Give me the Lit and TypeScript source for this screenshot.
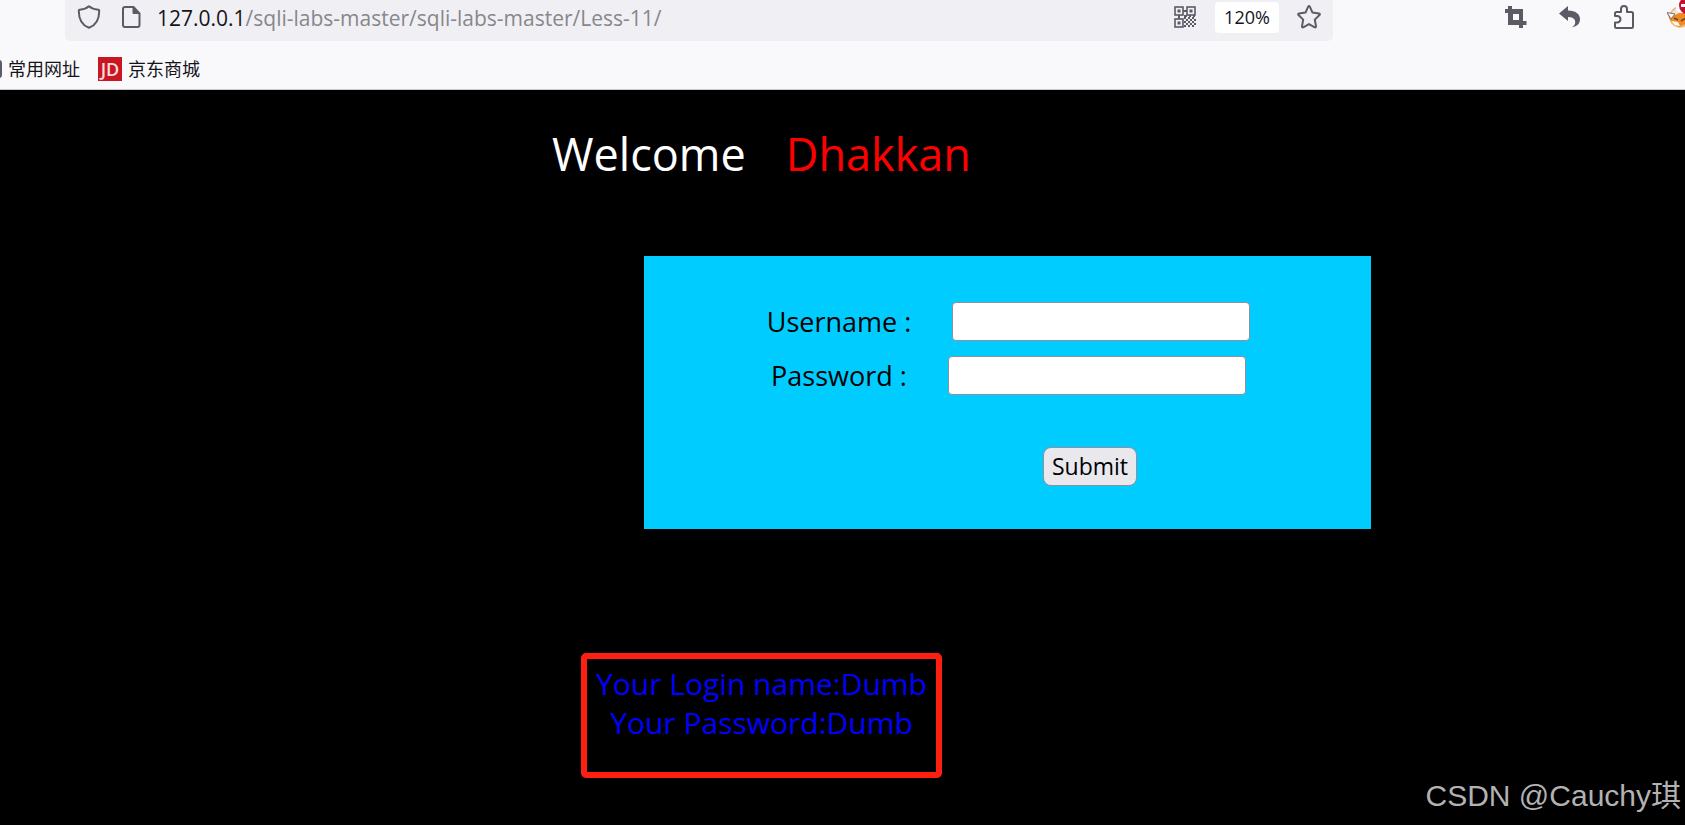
import { LitElement, html, css, svg } from "lit";
import { customElement } from "lit/decorators.js";

const QR_DOTS = [
  [14, 12], [18, 12],
  [12, 14], [16, 14], [20, 14],
  [14, 16], [18, 16],
  [12, 18], [16, 18], [20, 18],
  [14, 20], [18, 20],
];

@customElement("browser-chrome")
export class BrowserChrome extends LitElement {
  static styles = css`
    :host {
      display: block;
      background: #f9f9fb;
      border-bottom: 1px solid #c3cbc8;
      color: #15141a;
      font-family: "Open Sans", "Noto Sans CJK SC", sans-serif;
    }
    svg {
      display: block;
      flex: none;
    }
    a {
      color: inherit;
      text-decoration: none;
    }
    button {
      border: 0;
      padding: 0;
      background: none;
      color: #5b5b66;
      font: inherit;
      flex: none;
    }
    .toolbar {
      display: flex;
      height: 41px;
      padding-left: 65px;
      overflow: hidden;
    }
    .address {
      flex: 1;
      display: flex;
      align-items: center;
      box-sizing: border-box;
      padding: 0 12px 7px;
      background: #f0f0f4;
      border-radius: 0 0 5px 5px;
    }
    .page-icon {
      margin-left: 20px;
    }
    .url {
      flex: 1;
      margin-left: 16px;
      padding-top: 2px;
      font-size: 21px;
      line-height: 30px;
      color: #87878c;
      white-space: nowrap;
    }
    .host {
      color: #15141a;
    }
    .zoom {
      width: 64px;
      height: 31px;
      margin: 0 18px 0 19px;
      border-radius: 4px;
      background: #fff;
      color: #15141a;
      font-size: 18px;
      line-height: 31px;
    }
    .tools {
      display: flex;
      align-items: center;
      gap: 32px;
      width: 180px;
      padding: 0 0 7px 172px;
    }
    .bookmarks {
      display: flex;
      align-items: center;
      height: 48px;
      font-size: 18px;
      line-height: 26px;
      overflow: hidden;
    }
    .bookmark {
      display: flex;
      align-items: center;
      gap: 6px;
      margin-right: 18px;
      padding-top: 7px;
    }
    .folder {
      width: 2px;
    }
    .jd {
      width: 24px;
      height: 24px;
      background: #c81623;
      color: #fbdcde;
      font-family: "Open Sans", sans-serif;
      font-size: 18px;
      font-weight: 600;
      line-height: 25px;
      text-align: center;
    }
  `;

  render() {
    return html`
      <nav class="toolbar" aria-label="Navigation">
        <div class="address">
          <button aria-label="Tracking protection">
            <svg width="24" height="24" viewBox="0 0 24 24" fill="none" stroke="#5b5b66" stroke-width="2" stroke-linejoin="round">
              <path d="M12 1.2C9 3.8 5.500 4.500 2.600 4.800Q1.800 4.900 1.800 5.800C1.700 14 4.500 20 12 22.800C19.500 20 22.300 14 22.200 5.800Q22.200 4.900 21.400 4.800C18.500 4.500 15 3.800 12 1.200Z" />
            </svg>
          </button>
          <button class="page-icon" aria-label="Site information">
            <svg width="20" height="22" viewBox="0 0 20 22">
              <path d="M12.500 1H4Q2 1 2 3V19Q2 21 4 21H16.500Q18.500 21 18.500 19V7.500Z" fill="none" stroke="#5b5b66" stroke-width="2" stroke-linejoin="round" />
              <path d="M12 1V7.500H18.500Z" fill="#5b5b66" stroke="#5b5b66" stroke-linejoin="round" />
            </svg>
          </button>
          <a class="url" href="#"><span class="host">127.0.0.1</span>/sqli-labs-master/sqli-labs-master/Less-11/</a>
          <button aria-label="QR code">
            <svg width="22" height="22" viewBox="0 0 22 22">
              <g fill="none" stroke="#5b5b66" stroke-width="1.600">
                <rect x="1" y="1" width="8" height="8" />
                <rect x="13" y="1" width="8" height="8" />
                <rect x="1" y="13" width="8" height="8" />
              </g>
              <g fill="#5b5b66">
                <rect x="3.500" y="3.500" width="3" height="3" />
                <rect x="15.500" y="3.500" width="3" height="3" />
                <rect x="3.500" y="15.500" width="3" height="3" />
                <rect x="9" y="4" width="4" height="2" />
                <rect x="4" y="9" width="2" height="4" />
                <rect x="10" y="9" width="3" height="2" />
                <rect x="15" y="9" width="2" height="2" />
                <rect x="19" y="9" width="2" height="2" />
                ${QR_DOTS.map(([x, y]) => svg`<rect x=${x} y=${y - 1} width="2" height="2" />`)}
                <rect x="10" y="11" width="2" height="2" />
                <rect x="10" y="15" width="2" height="2" />
                <rect x="10" y="19" width="2" height="2" />
              </g>
            </svg>
          </button>
          <button class="zoom">120%</button>
          <button aria-label="Bookmark this page">
            <svg width="24" height="24" viewBox="0 0 24 24" fill="none" stroke="#5b5b66" stroke-width="2" stroke-linejoin="round">
              <path d="M11.200 1.700Q12 .5 12.800 1.700L15.500 7.600L22 8.500Q23.400 9 22.500 10L17.800 14.600L19 21.300Q19 22.700 17.800 22.300L12 19.100L6.200 22.300Q5 22.700 5 21.300L6.200 14.600L1.500 10Q.6 9 2 8.500L8.500 7.600Z" />
            </svg>
          </button>
        </div>
        <div class="tools">
          <button aria-label="Screenshot">
            <svg width="22" height="22" viewBox="0 0 22 22" fill="#5b5b66">
              <path d="M3 0H7V3H18V15H21.500V19H18V22H14V19H3V7H0V3H3ZM8 8V14H14V8Z" fill-rule="evenodd" />
            </svg>
          </button>
          <button aria-label="Undo">
            <svg width="22" height="22" viewBox="0 0 22 22" fill="#5b5b66">
              <path d="M0 7.500L9 0V4.500C17 4.500 21.500 8.500 21 14Q20.500 19.500 13 21.500Q17.500 18 15.800 14Q14.300 11 9 11V15Z" />
            </svg>
          </button>
          <button aria-label="Extensions">
            <svg width="22" height="24" viewBox="0 0 22 24" fill="none" stroke="#5b5b66" stroke-width="2" stroke-linejoin="round">
              <path d="M2 11V8.500Q2 7 3.500 7H8V4Q8 1 11 1T14 4V7H18.500Q20 7 20 8.500V21.500Q20 23 18.500 23H3.500Q2 23 2 21.500V17.500H4.500Q7.500 17 7.500 14.250T4.500 11Z" />
            </svg>
          </button>
          <button aria-label="Proxy extension">
            <svg width="28" height="34" viewBox="0 0 28 34">
              <circle cx="13" cy="17" r="10" fill="#e9e4df" stroke="#f7b474" stroke-width="1.500" />
              <path d="M0 13L8 15L14 12L22 14V23L12 27L4 22Z" fill="#f08a24" />
              <path d="M0 12.500L8 14L4 19Z" fill="#f9f9fb" stroke="#77716d" />
              <path d="M4 21L11 22L13 26L8 25Z" fill="#fff" />
              <path d="M7 18L11 20M14 21L19 18" stroke="#6b4a2a" stroke-width="1.500" />
              <rect x="9" y="-8" width="28" height="21" rx="5" fill="#fff" />
              <circle cx="21" cy="5.500" r="9" fill="#c50f2e" />
              <rect x="14" y="4" width="14" height="3" fill="#fff" />
            </svg>
          </button>
        </div>
      </nav>
      <nav class="bookmarks" aria-label="Bookmarks">
        <a class="bookmark" href="#">
          <svg class="folder" width="2" height="18" viewBox="0 0 2 18">
            <path d="M-4 1H-1Q1 1 1 3V15Q1 17 -1 17H-4" fill="none" stroke="#5b5b66" stroke-width="2" />
          </svg>
          <span>常用网址</span>
        </a>
        <a class="bookmark" href="#"><span class="jd">JD</span><span>京东商城</span></a>
      </nav>
    `;
  }
}

@customElement("login-form")
export class LoginForm extends LitElement {
  static styles = css`
    :host {
      display: block;
      box-sizing: border-box;
      background: #00ccff;
      color: #000;
      padding: 46px 24px 43px 0;
      font-size: 27px;
    }
    .form {
      display: flex;
      flex-direction: column;
      align-items: center;
    }
    .row {
      display: flex;
      align-items: center;
      gap: 41px;
      margin-bottom: 15px;
      padding-left: 26px;
    }
    .field {
      box-sizing: border-box;
      width: 298px;
      height: 39px;
      padding: 2px 4px;
      border: 1px solid #8f8f9d;
      border-radius: 4px;
      background: #fff;
      font: inherit;
    }
    .label {
      line-height: 39px;
    }
    .submit {
      height: 39px;
      margin: 37px 0 0 189px;
      padding: 0 8px;
      border: 1px solid #8f8f9d;
      border-radius: 8px;
      background: #e9e9ed;
      color: #000;
      font-family: inherit;
      font-size: 23px;
      line-height: 37px;
    }
  `;

  render() {
    return html`
      <form class="form" @submit=${(e: Event) => e.preventDefault()}>
        <div class="row">
          <label class="label" for="uname">Username :</label>
          <input class="field" id="uname" type="text" name="uname" />
        </div>
        <div class="row">
          <label class="label" for="passwd">Password :</label>
          <input class="field" id="passwd" type="password" name="passwd" />
        </div>
        <button class="submit" type="submit">Submit</button>
      </form>
    `;
  }
}

@customElement("app-root")
export class AppRoot extends LitElement {
  static styles = css`
    :host {
      display: flex;
      flex-direction: column;
      min-height: 100vh;
      background: #000;
      font-family: "Open Sans", "Noto Sans CJK SC", sans-serif;
    }
    .page {
      flex: 1;
      display: flex;
      flex-direction: column;
      align-items: center;
      padding: 32px 162px 0 0;
    }
    .welcome {
      display: flex;
      gap: 40px;
      margin: 0;
      font-size: 45px;
      font-weight: 400;
      line-height: 64px;
      color: #fff;
    }
    .name {
      color: #f00;
    }
    .login {
      width: 727px;
      max-width: 100%;
      margin: 70px 0 124px 492px;
    }
    .result {
      box-sizing: border-box;
      min-height: 125px;
      padding: 5px 9px;
      border: 6px solid #ff1f12;
      border-radius: 5px;
      color: #00f;
      font-size: 30px;
      line-height: 39px;
      text-align: center;
    }
    .line {
      margin: 0;
    }
    .watermark {
      position: absolute;
      right: 4px;
      bottom: 7px;
      color: #b2b2b2;
      font-family: "Liberation Sans", "Noto Sans CJK SC", sans-serif;
      font-size: 30px;
      line-height: 44px;
    }
  `;

  render() {
    return html`
      <browser-chrome></browser-chrome>
      <main class="page">
        <h1 class="welcome"><span>Welcome</span><span class="name">Dhakkan</span></h1>
        <login-form class="login"></login-form>
        <section class="result">
          <p class="line">Your Login name:Dumb</p>
          <p class="line">Your Password:Dumb</p>
        </section>
      </main>
      <div class="watermark">CSDN @Cauchy琪</div>
    `;
  }
}
